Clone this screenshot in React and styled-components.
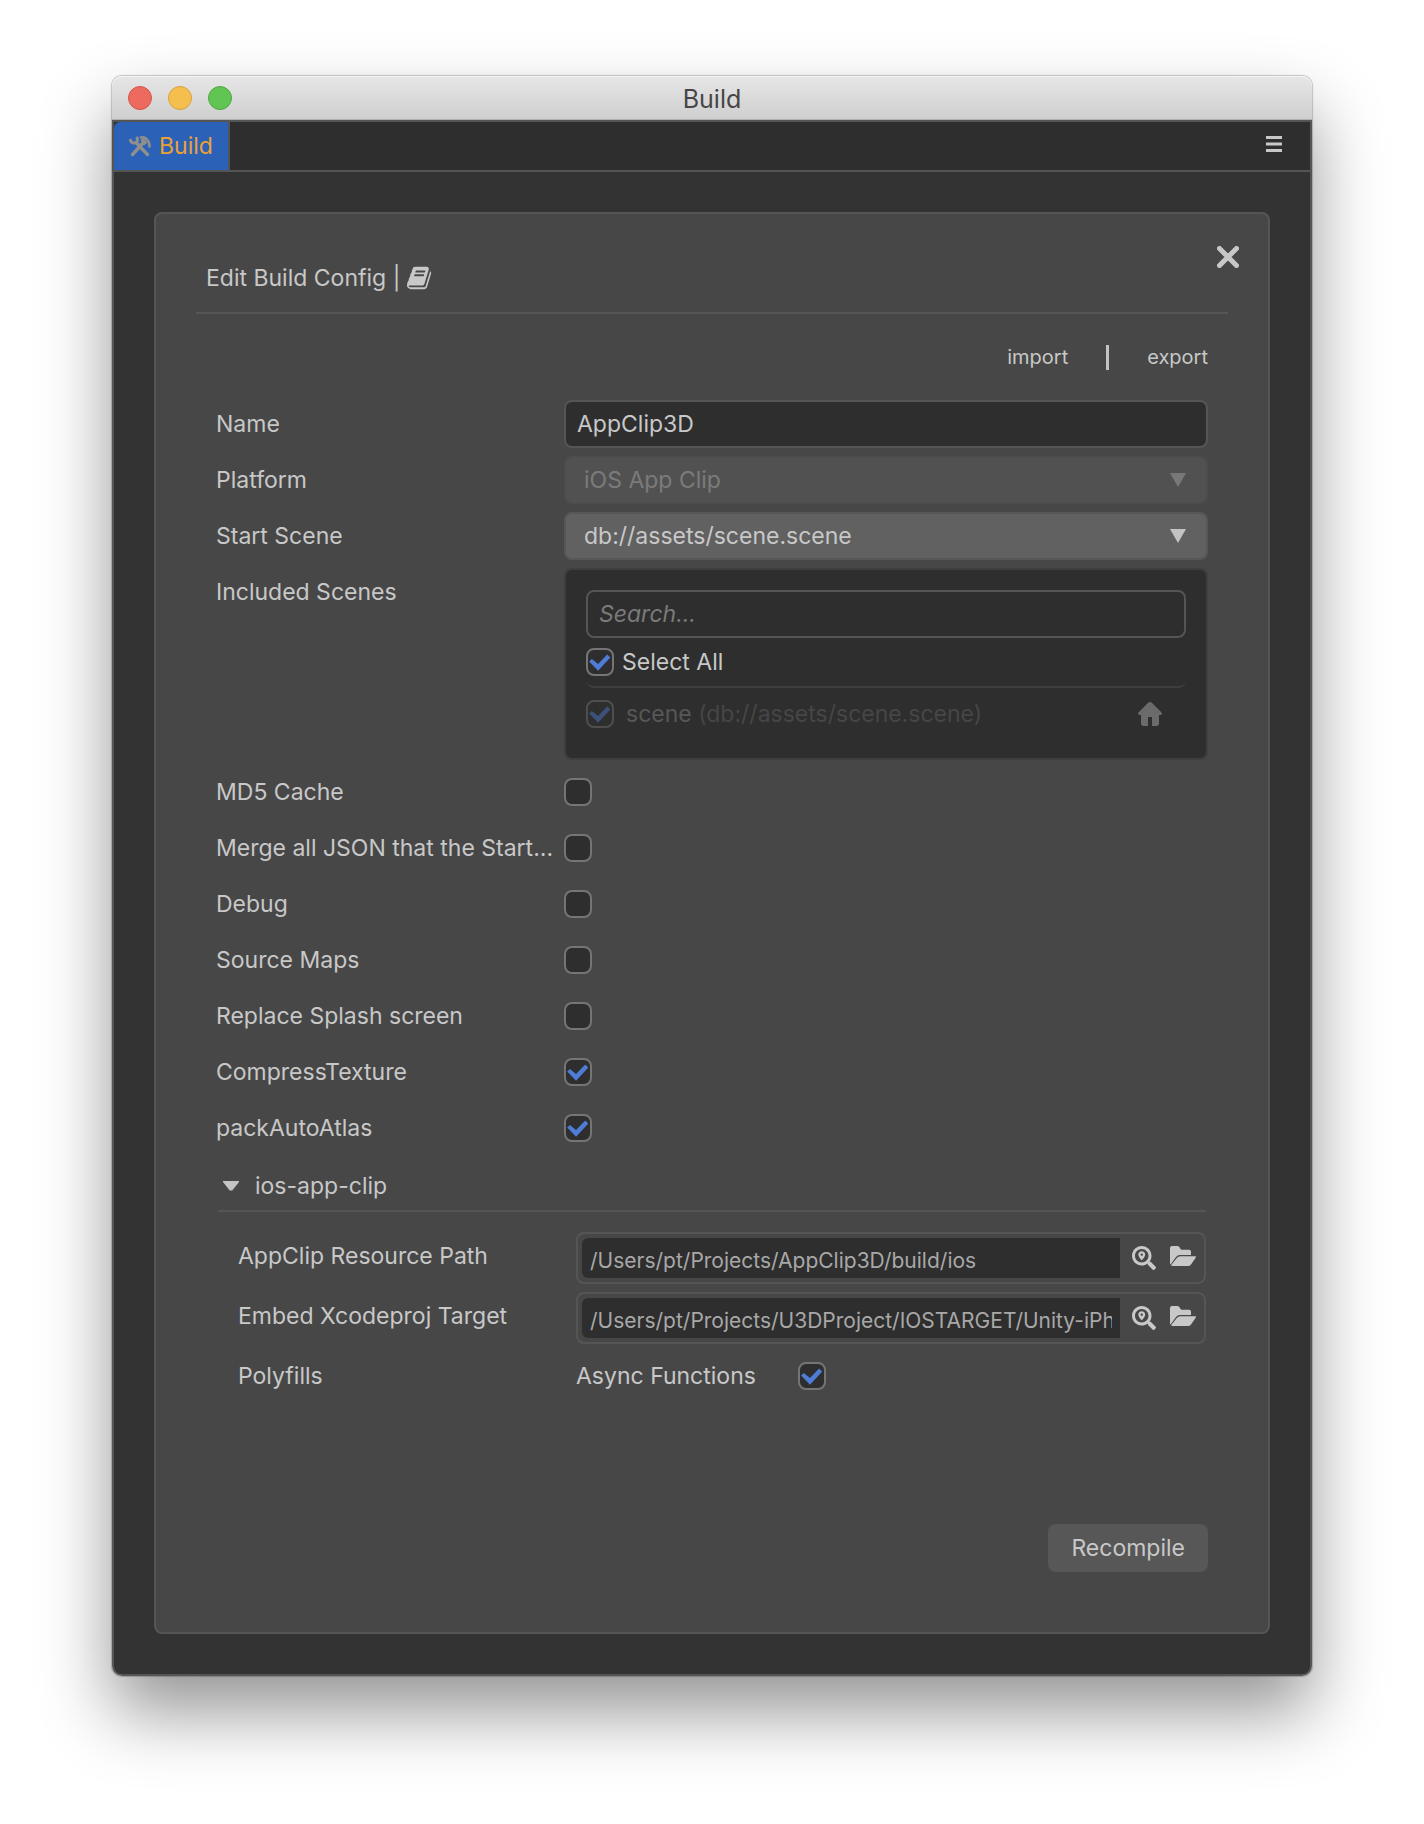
import React, { useState } from 'react';
import styled, { createGlobalStyle } from 'styled-components';
import { FaSearchLocation } from 'react-icons/fa';

const options = [
  { id: 'md5', text: 'MD5 Cache', checked: false },
  { id: 'merge', text: 'Merge all JSON that the Start...', checked: false },
  { id: 'debug', text: 'Debug', checked: false },
  { id: 'maps', text: 'Source Maps', checked: false },
  { id: 'splash', text: 'Replace Splash screen', checked: false },
  { id: 'compress', text: 'CompressTexture', checked: true },
  { id: 'atlas', text: 'packAutoAtlas', checked: true },
];

const paths = [
  { id: 'resource', text: 'AppClip Resource Path', value: '/Users/pt/Projects/AppClip3D/build/ios' },
  { id: 'target', text: 'Embed Xcodeproj Target', value: '/Users/pt/Projects/U3DProject/IOSTARGET/Unity-iPhone' },
];

const ToolsIcon = () => (
  <svg width="22" height="22" viewBox="0 0 22 22" fill="none" stroke="currentColor" aria-hidden="true">
    <path d="M7 7.5L18.500 19.500" strokeWidth="3.400" strokeLinecap="round" />
    <path d="M1.200 4c.3 3 2.300 4.500 4.800 4 2.600-.6 3.300-3.600 1.500-6" strokeWidth="3" />
    <path d="M3.500 19.500L14 8" strokeWidth="3.400" strokeLinecap="round" />
    <path d="M11 3c3-1.500 5.500-.5 7.500 2s2.500 4.500 1.500 7.500" strokeWidth="2.600" />
    <path d="M13 4l4 5" strokeWidth="4" />
  </svg>
);

const BookIcon = () => (
  <svg width="26" height="26" viewBox="0 0 1792 1792" fill="currentColor" aria-hidden="true">
    <path d="M1639 478q40 57 18 129l-275 906q-19 64-76.500 107.500t-122.500 43.500h-923q-77 0-148.500-53.500t-99.500-131.500q-24-67-2-127 0-4 3-27t4-37q1-8-3-21.500t-3-19.500q2-11 8-21t16.500-23.500 16.500-23.500q23-38 45-91.500t30-91.500q3-10 .5-30t-.5-28q3-11 17-28t17-23q21-36 42-92t25-90q1-9-2.500-32t.5-28q4-13 22-30.500t22-22.500q19-26 42.500-84.500t27.500-96.500q1-8-3-25.500t-2-26.500q2-8 9-18t18-23 17-21q8-12 16.500-30.500t15-35 16-36 19.500-32 26.500-23.500 36-11.500 47.500 5.500l-1 3q38-9 51-9h761q74 0 114 56t18 130l-274 906q-36 119-71.500 153.500t-128.500 34.500h-869q-27 0-38 15-11 16-1 43 24 70 144 70h923q29 0 56-15.500t35-41.500l300-987q7-22 5-57 38 15 59 43zm-1064 2q-4 13 2 22.500t20 9.500h608q13 0 25.500-9.500t16.500-22.500l21-64q4-13-2-22.500t-20-9.500h-608q-13 0-25.500 9.500t-16.500 22.500zm-83 256q-4 13 2 22.500t20 9.500h608q13 0 25.500-9.500t16.500-22.500l21-64q4-13-2-22.500t-20-9.500h-608q-13 0-25.500 9.500t-16.500 22.500z" />
  </svg>
);

const HomeIcon = () => (
  <svg width="24" height="24" viewBox="0 0 24 24" fill="currentColor" aria-hidden="true">
    <path d="M10.400.6Q12-.6 13.600.6L23.300 10.200Q25 12.500 22.500 13H21v8.500q0 2.500-2.500 2.500H14v-9h-4v9H5.500Q3 24 3 21.500V13H1.500Q-1 12.500.7 10.200z" />
  </svg>
);

const FolderIcon = () => (
  <svg width="26" height="24" viewBox="0 0 26 24" fill="currentColor" aria-hidden="true">
    <path d="M0 2Q0 0 2 0H7.500Q9 0 9.700 1.500Q10.500 3.800 12 3.800H19Q21 3.800 21 5.800V9H10Q7.500 9 6 11L.6 18.500Q0 18.500 0 17.500z" />
    <path d="M10.200 10.300H25.200Q26.500 10.500 25.700 11.700L21 18.500Q20 20 18.200 20H2.200Q.8 19.800 1.600 18.500L6.800 12Q8.200 10.300 10.200 10.300z" />
  </svg>
);

const CloseIcon = () => (
  <svg width="22" height="22" viewBox="0 0 22 22" stroke="currentColor" strokeWidth="5" strokeLinecap="round" aria-hidden="true">
    <path d="M2.500 2.500l17 17M19.500 2.500l-17 17" />
  </svg>
);

const MenuIcon = () => (
  <svg width="16" height="16" viewBox="0 0 16 16" fill="currentColor" aria-hidden="true">
    <path d="M0 0h16v3H0zM0 6.500h16v3H0zM0 13h16v3H0z" />
  </svg>
);

const App = () => {
  const [open, setOpen] = useState(true);
  return (
    <>
      <GlobalStyle />
      <Desktop>
        <AppWindow>
          <TitleBar>
            <Lights>
              <Light $color="#ec6a5e" $edge="#d5544a" aria-label="Close window" />
              <Light $color="#f5bf4f" $edge="#d8a13c" aria-label="Minimize window" />
              <Light $color="#61c554" $edge="#4eaa41" aria-label="Zoom window" />
            </Lights>
            <h1>Build</h1>
          </TitleBar>
          <Frame>
            <TabBar>
              <Tab>
                <ToolsIcon />
                <span>Build</span>
              </Tab>
              <MenuButton aria-label="Menu">
                <MenuIcon />
              </MenuButton>
            </TabBar>
            <Body>
              <Panel>
                <CloseButton aria-label="Close">
                  <CloseIcon />
                </CloseButton>
                <PanelHeader>
                  <h2>Edit Build Config |</h2>
                  <IconButton aria-label="Manual">
                    <BookIcon />
                  </IconButton>
                </PanelHeader>
                <Content>
                  <Links>
                    <LinkButton>import</LinkButton>
                    <Divider />
                    <LinkButton>export</LinkButton>
                  </Links>
                  <Rows>
                    <Row>
                      <Label htmlFor="name">Name</Label>
                      <TextInput id="name" defaultValue="AppClip3D" />
                    </Row>
                    <Row>
                      <Label htmlFor="platform">Platform</Label>
                      <SelectBox $disabled>
                        <select id="platform" disabled>
                          <option>iOS App Clip</option>
                        </select>
                        <Arrow />
                      </SelectBox>
                    </Row>
                    <Row>
                      <Label htmlFor="start">Start Scene</Label>
                      <SelectBox>
                        <select id="start">
                          <option>db://assets/scene.scene</option>
                        </select>
                        <Arrow />
                      </SelectBox>
                    </Row>
                    <Row>
                      <Label as="span">Included Scenes</Label>
                      <SceneList>
                        <TextInput aria-label="Search scenes" placeholder="Search..." />
                        <SelectAll>
                          <Checkbox id="all" defaultChecked />
                          <label htmlFor="all">Select All</label>
                        </SelectAll>
                        <Scene>
                          <Checkbox id="scene" defaultChecked disabled />
                          <label htmlFor="scene">
                            scene <small>(db://assets/scene.scene)</small>
                          </label>
                          <HomeIcon />
                        </Scene>
                      </SceneList>
                    </Row>
                    {options.map(({ id, text, checked }) => (
                      <Row key={id}>
                        <Label htmlFor={id}>{text}</Label>
                        <CheckCell>
                          <Checkbox id={id} defaultChecked={checked} />
                        </CheckCell>
                      </Row>
                    ))}
                  </Rows>
                  <Section>
                    <SectionHeader aria-expanded={open} onClick={() => setOpen(!open)}>
                      <Caret $open={open} />
                      ios-app-clip
                    </SectionHeader>
                    {open && (
                      <SectionBody>
                        {paths.map(({ id, text, value }) => (
                          <Row key={id} $nested>
                            <Label htmlFor={id}>{text}</Label>
                            <FileBox>
                              <input id={id} defaultValue={value} />
                              <IconButton aria-label="Reveal path">
                                <FaSearchLocation size={24} />
                              </IconButton>
                              <IconButton aria-label="Choose folder">
                                <FolderIcon />
                              </IconButton>
                            </FileBox>
                          </Row>
                        ))}
                        <Row $nested>
                          <Label as="span">Polyfills</Label>
                          <CheckCell>
                            <label htmlFor="async">Async Functions</label>
                            <Checkbox id="async" defaultChecked />
                          </CheckCell>
                        </Row>
                      </SectionBody>
                    )}
                  </Section>
                  <Footer>
                    <Recompile>Recompile</Recompile>
                  </Footer>
                </Content>
              </Panel>
            </Body>
          </Frame>
        </AppWindow>
      </Desktop>
    </>
  );
};

const GlobalStyle = createGlobalStyle`
  * {
    box-sizing: border-box;
  }
  body {
    margin: 0;
    background: #fff;
    color: #c8c8c8;
    font-family: Inter, 'Liberation Sans', sans-serif;
    font-size: 23px;
  }
  button, input, select {
    font: inherit;
    color: inherit;
    margin: 0;
  }
  button {
    padding: 0;
    border: 0;
    background: none;
    cursor: pointer;
  }
  h1, h2 {
    margin: 0;
    font-weight: 400;
  }
  svg {
    display: block;
    flex-shrink: 0;
  }
`;

const Desktop = styled.div`
  padding: 76px 112px 148px;
`;

const AppWindow = styled.div`
  border-radius: 10px;
  box-shadow: 0 0 1px 1px rgba(0, 0, 0, 0.2), 0 36px 70px rgba(0, 0, 0, 0.42);
`;

const TitleBar = styled.header`
  display: grid;
  grid-template-columns: 1fr auto 1fr;
  align-items: center;
  height: 44px;
  padding: 0 16px;
  border-radius: 10px 10px 0 0;
  border-bottom: 1px solid #b0b0b0;
  background: linear-gradient(#e6e6e6, #cfcfcf);
  box-shadow: inset 0 1px 0 #f4f4f4;
  color: #464646;
  h1 {
    padding-top: 2px;
    font-size: 25px;
    line-height: 32px;
  }
`;

const Lights = styled.div`
  display: flex;
  gap: 16px;
`;

const Light = styled.button`
  width: 24px;
  height: 24px;
  border: 1px solid ${({ $edge }) => $edge};
  border-radius: 50%;
  background: ${({ $color }) => $color};
`;

const Frame = styled.div`
  border: 2px solid #555;
  border-radius: 0 0 10px 10px;
  background: #333;
`;

const TabBar = styled.nav`
  display: flex;
  align-items: center;
  justify-content: space-between;
  border-bottom: 2px solid #555;
  background: #2e2e2e;
`;

const Tab = styled.button`
  display: flex;
  align-items: center;
  gap: 8px;
  height: 48px;
  padding: 0 15px;
  box-shadow: 2px 0 0 #555;
  border-radius: 6px 0 0 0;
  background: #2b62b8;
  color: #8f8f8c;
  span {
    color: #eaa036;
  }
`;

const MenuButton = styled.button`
  padding: 4px 28px 8px;
`;

const Body = styled.main`
  padding: 40px;
`;

const Panel = styled.section`
  position: relative;
  border: 2px solid #555;
  border-radius: 8px;
  background: #474747;
`;

const CloseButton = styled.button`
  position: absolute;
  top: 32px;
  right: 29px;
`;

const IconButton = styled.button`
  display: flex;
`;

const PanelHeader = styled.div`
  display: flex;
  align-items: center;
  gap: 7px;
  margin: 0 40px;
  padding: 48px 10px 18px;
  border-bottom: 2px solid #555;
  h2 {
    font-size: 23px;
    line-height: 32px;
  }
`;

const Content = styled.div`
  padding: 0 60px 60px;
`;

const Links = styled.div`
  display: flex;
  align-items: center;
  justify-content: flex-end;
  gap: 38px;
  height: 86px;
`;

const LinkButton = styled.button`
  font-size: 20px;
`;

const Divider = styled.span`
  width: 3px;
  height: 25px;
  background: #c3c3c3;
`;

const Rows = styled.div`
  display: flex;
  flex-direction: column;
  gap: 8px;
`;

const Row = styled.div`
  display: grid;
  grid-template-columns: ${({ $nested }) => ($nested ? '334px' : '344px')} minmax(0, 1fr);
  gap: 4px;
`;

const Label = styled.label`
  overflow: hidden;
  line-height: 48px;
  text-overflow: ellipsis;
  white-space: nowrap;
`;

const TextInput = styled.input`
  width: 100%;
  height: 48px;
  padding: 0 11px;
  border: 2px solid #555;
  border-radius: 8px;
  outline: none;
  background: #2e2e2e;
  &::placeholder {
    color: #7a7a7a;
    font-style: italic;
  }
`;

const SelectBox = styled.div`
  display: grid;
  align-items: center;
  opacity: ${({ $disabled }) => ($disabled ? 0.4 : 1)};
  select {
    grid-area: 1 / 1;
    width: 100%;
    height: 48px;
    padding: 0 48px 0 18px;
    border: 2px solid #575757;
    border-radius: 8px;
    appearance: none;
    opacity: 1;
    background: #616161;
  }
`;

const Arrow = styled.span`
  grid-area: 1 / 1;
  justify-self: end;
  width: 16px;
  height: 14px;
  margin-right: 22px;
  background: #c3c3c3;
  clip-path: polygon(0 0, 100% 0, 50% 100%);
  pointer-events: none;
`;

const SceneList = styled.div`
  padding: 20px 20px 18px;
  border: 2px solid #3e3e3e;
  border-radius: 8px;
  background: #2e2e2e;
`;

const SelectAll = styled.div`
  display: flex;
  align-items: center;
  gap: 8px;
  height: 50px;
  border-bottom: 2px solid #3e3e3e;
  border-radius: 8px;
`;

const Scene = styled.div`
  display: flex;
  align-items: center;
  gap: 12px;
  height: 52px;
  padding-right: 24px;
  color: #6b6b6b;
  label {
    flex: 1;
    color: #575757;
  }
  small {
    color: #464646;
    font-size: 23px;
  }
`;

const Checkbox = styled.input.attrs({ type: 'checkbox' })`
  flex-shrink: 0;
  width: 28px;
  height: 28px;
  border: 2px solid #757575;
  border-radius: 8px;
  appearance: none;
  background: #2e2e2e;
  &:checked::before {
    content: '';
    display: block;
    width: 24px;
    height: 24px;
    background: #4f7cd6;
    clip-path: polygon(5% 48%, 16% 38%, 42% 58%, 80% 19%, 93% 31%, 42% 86%);
  }
  &:disabled {
    opacity: 0.45;
  }
`;

const CheckCell = styled.div`
  display: flex;
  align-items: center;
  gap: 42px;
  height: 48px;
`;

const Section = styled.section`
  margin: 8px 2px 0;
`;

const SectionHeader = styled.button`
  display: flex;
  align-items: center;
  gap: 16px;
  width: 100%;
  height: 52px;
  padding: 2px 0 0 5px;
  border-bottom: 2px solid #555;
`;

const Caret = styled.span`
  width: 16px;
  height: 10px;
  background: #c3c3c3;
  clip-path: polygon(0 0, 100% 0, 100% 10%, 58% 95%, 42% 95%, 0 10%);
  transform: ${({ $open }) => ($open ? 'none' : 'rotate(-90deg)')};
`;

const SectionBody = styled.div`
  display: flex;
  flex-direction: column;
  gap: 8px;
  padding: 20px 0 0 20px;
`;

const FileBox = styled.div`
  display: flex;
  align-items: center;
  padding: 4px;
  border: 2px solid #555;
  border-radius: 8px;
  input {
    flex: 1;
    min-width: 0;
    height: 40px;
    margin-right: 12px;
    padding: 4px 8px 0;
    border: 0;
    border-radius: 6px 0 0 6px;
    outline: none;
    background: #2e2e2e;
    color: #a8a8a8;
    font-size: 21px;
  }
  button + button {
    margin: 0 4px 0 14px;
  }
`;

const Footer = styled.footer`
  display: flex;
  justify-content: flex-end;
  padding-top: 124px;
`;

const Recompile = styled.button`
  height: 48px;
  padding: 0 23px;
  border-radius: 8px;
  background: #575757;
`;

export default App;
